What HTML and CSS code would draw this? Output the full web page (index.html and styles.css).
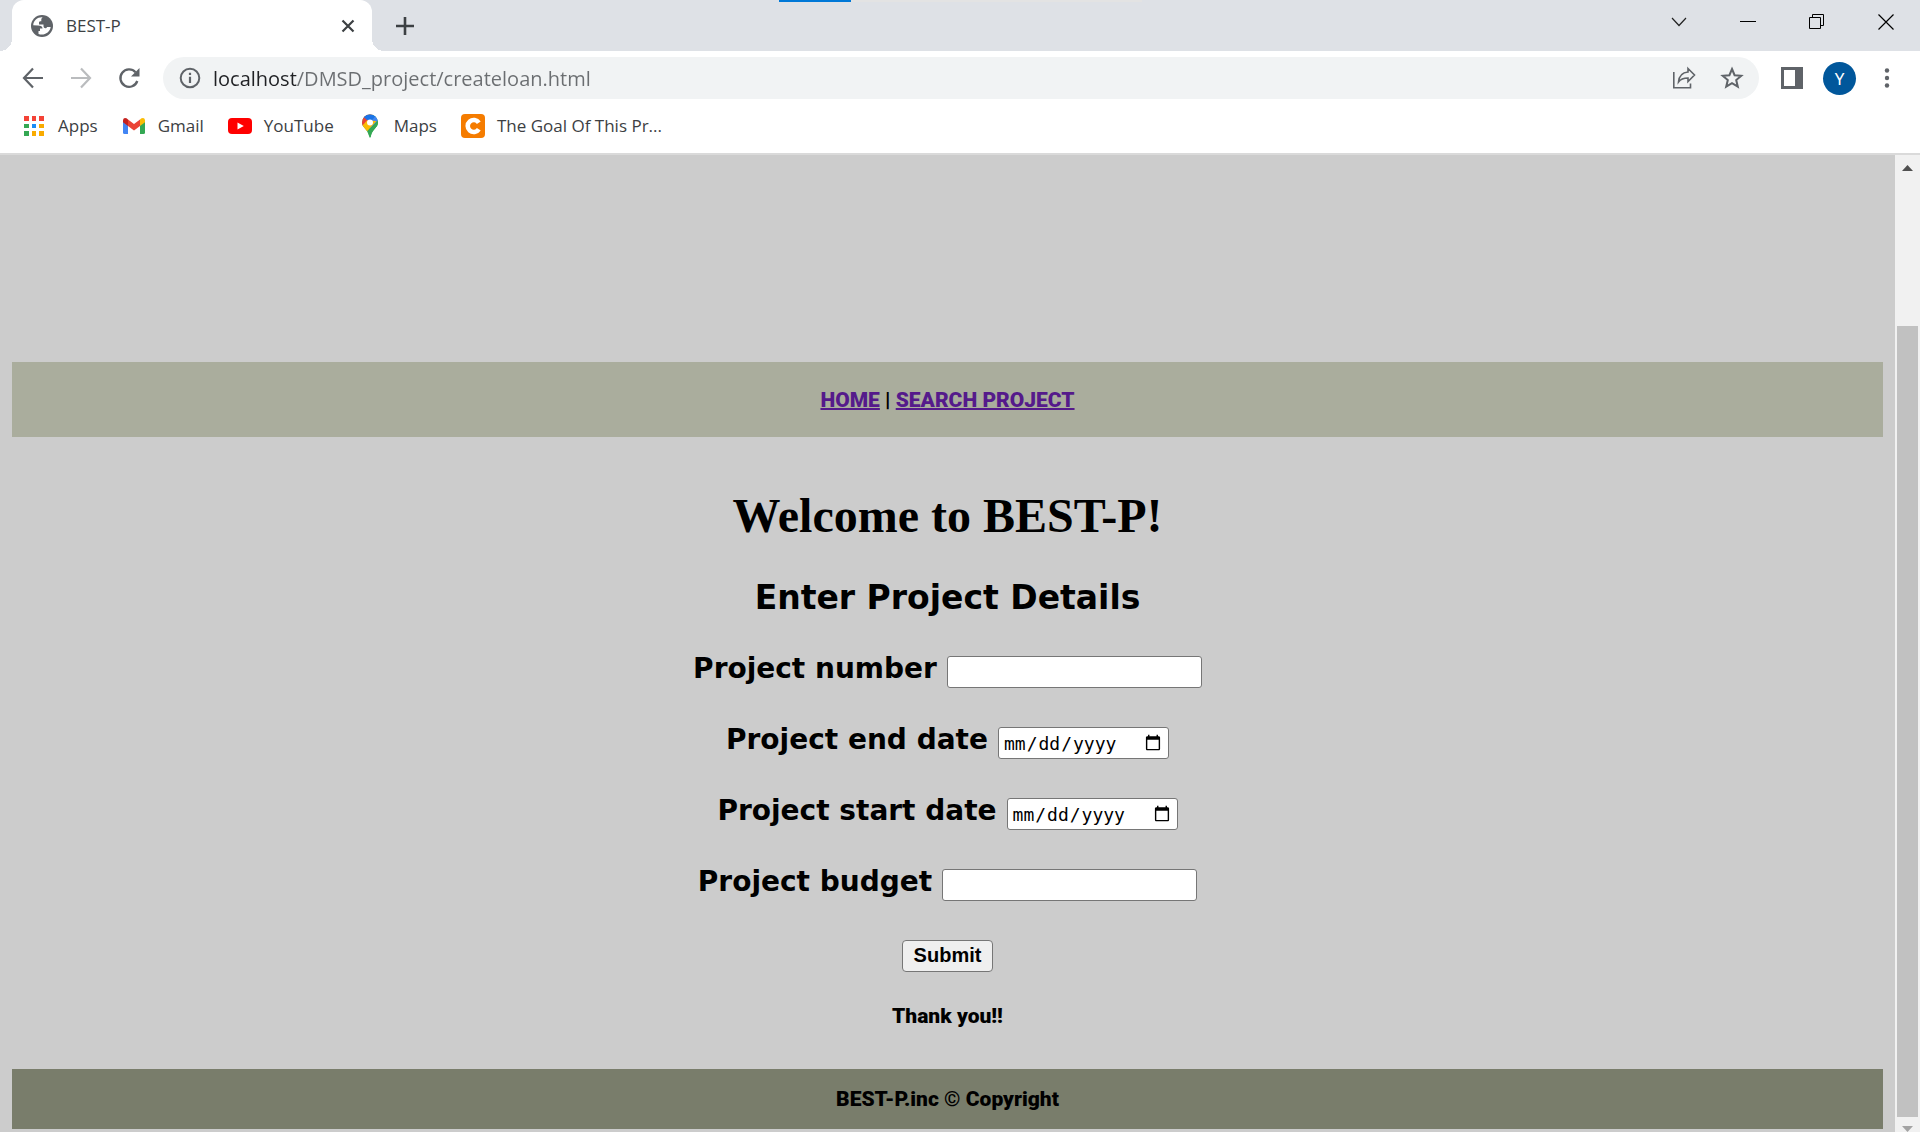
FILE: index.html
```html
<!DOCTYPE html>
<html lang="en-US">
<head>
<meta charset="utf-8">
<title>BEST-P</title>
<link rel="stylesheet" href="styles.css">
</head>
<body>
<div class="browser">
  <header class="tabstrip">
    <div class="tab">
      <svg class="tab-icon" width="24" height="24" viewBox="0 0 24 24"><circle cx="12" cy="12" r="11" fill="#5f6368"/><path d="M12.500 3.300C7.500 3 3.500 6.500 3.200 11.300L8 11.500C11 11.500 12.500 12.500 12.500 14.500H10V17H8.500V20C14 22 20 18.500 20.700 13H17C16.500 15 13.500 14.500 13.500 12V10.500H9V8.500C9 7.500 10 7.300 11.300 7.300V5.500C11.300 4.500 12 4.300 12.500 3.300Z" fill="#fff"/></svg>
      <span class="tab-title">BEST-P</span>
      <button class="tab-close" aria-label="Close tab"><svg width="14" height="14" viewBox="0 0 14 14"><path d="M1.500 1.500L12.500 12.500M12.500 1.500L1.500 12.500" stroke="#3c4043" stroke-width="2.200"/></svg></button>
    </div>
    <button class="new-tab" aria-label="New tab"><svg width="18" height="18" viewBox="0 0 18 18"><path d="M9 0V18M0 9H18" stroke="#3c4043" stroke-width="2.600"/></svg></button>
    <div class="window-controls">
      <button aria-label="Search tabs"><svg width="16" height="16" viewBox="0 0 16 16"><path d="M1 4L8 11.500L15 4" fill="none" stroke="#222" stroke-width="1.200"/></svg></button>
      <button aria-label="Minimize"><svg width="16" height="16" viewBox="0 0 16 16"><path d="M0 7.500H16" stroke="#000"/></svg></button>
      <button aria-label="Restore"><svg width="16" height="16" viewBox="0 0 16 16"><path d="M.5 3.500H11.500V14.500H.5ZM3.500 3V.5H14.500V11.500H12" fill="none" stroke="#000"/></svg></button>
      <button aria-label="Close"><svg width="16" height="16" viewBox="0 0 16 16"><path d="M.5 .5L15.500 15.500M15.500 .5L.5 15.500" stroke="#000" stroke-width="1.200"/></svg></button>
    </div>
    <div class="progress"></div>
  </header>
  <div class="toolbar">
    <div class="nav-buttons">
      <button aria-label="Back"><svg width="24" height="24" viewBox="0 0 24 24"><path d="M22 12H3.500M12 2.500L3 12L12 21.500" fill="none" stroke="#5f6368" stroke-width="2.200"/></svg></button>
      <button aria-label="Forward"><svg width="24" height="24" viewBox="0 0 24 24"><path d="M2 12H20.500M12 2.500L21 12L12 21.500" fill="none" stroke="#babcbe" stroke-width="2.200"/></svg></button>
      <button aria-label="Reload"><svg width="24" height="24" viewBox="0 0 24 24"><path d="M20.300 15A8.700 8.700 0 1 1 18.500 6.200" fill="none" stroke="#5f6368" stroke-width="2.300"/><path d="M22.500 2V10.500H14Z" fill="#5f6368"/></svg></button>
    </div>
    <div class="omnibox">
      <svg width="22" height="22" viewBox="0 0 22 22"><circle cx="11" cy="11" r="9.300" fill="none" stroke="#5f6368" stroke-width="2"/><path d="M11 9.800V16M11 5.800V8" stroke="#5f6368" stroke-width="2.200"/></svg>
      <input class="address" type="text" aria-label="Address" value="localhost/DMSD_project/createloan.html">
      <button aria-label="Share"><svg width="24" height="24" viewBox="0 0 24 24"><path d="M1.800 6V21.800H18.500V17.500M16 2.500L22.500 9L16 15.500V12C11.500 12 8.500 13.200 6.500 16C7 10.500 10.500 6.500 16 6Z" fill="none" stroke="#5f6368" stroke-width="1.600"/></svg></button>
      <button aria-label="Bookmark this page"><svg width="24" height="24" viewBox="0 0 24 24"><path d="M12 3L14.600 9.200L21.300 9.700L16.200 14.100L17.800 20.700L12 17.200L6.200 20.700L7.800 14.100L2.700 9.700L9.400 9.200Z" fill="none" stroke="#5f6368" stroke-width="2"/></svg></button>
    </div>
    <div class="tools">
      <button aria-label="Side panel"><svg width="22" height="22" viewBox="0 0 22 22"><path d="M0 0H22V22H0ZM3 3V19H14V3Z" fill="#5f6368" fill-rule="evenodd"/></svg></button>
      <button class="avatar" aria-label="Profile">Y</button>
      <button aria-label="Menu"><svg width="22" height="22" viewBox="0 0 22 22"><g fill="#5f6368"><circle cx="11" cy="3.500" r="2.200"/><circle cx="11" cy="11" r="2.200"/><circle cx="11" cy="18.500" r="2.200"/></g></svg></button>
    </div>
  </div>
  <nav class="bookmarks" aria-label="Bookmarks">
    <a href="#"><svg width="24" height="24" viewBox="0 0 24 24"><g fill="#f44336"><path d="M2 2h5v5H2zM10 2h4v5h-4zM17 2h5v5h-5z"/></g><path d="M2 10h5v4H2zM2 17h5v5H2z" fill="#34a853"/><path d="M10 10h4v4h-4z" fill="#1a8cf5"/><path d="M17 10h5v4h-5zM17 17h5v5h-5zM10 17h4v5h-4z" fill="#f9ab00"/></svg>Apps</a>
    <a href="#"><svg width="24" height="24" viewBox="0 0 24 24"><path d="M1 6L6 9.500V20H2.500Q1 20 1 18.500Z" fill="#4285f4"/><path d="M18 9.500L23 6V18.500Q23 20 21.500 20H18Z" fill="#34a853"/><path d="M18 5.500L19.500 4.300Q23 3 23 6.500V8.200L18 12Z" fill="#fbbc04"/><path d="M6 12V5.500L12 10L18 5.500V12L12 16.500Z" fill="#ea4335"/><path d="M1 8.200V6.500Q1 3 4.500 4.300L6 5.500V12Z" fill="#c5221f"/></svg>Gmail</a>
    <a href="#"><svg width="24" height="24" viewBox="0 0 24 24"><rect y="4" width="24" height="16" rx="4" fill="#f00"/><path d="M9.500 8.500L15.800 12L9.500 15.500Z" fill="#fff"/></svg>YouTube</a>
    <a href="#"><svg width="24" height="24" viewBox="0 0 24 24"><clipPath id="pin"><path d="M12 .5A8 8 0 0 0 4 8.500C4 14 10 15 11.200 22.500Q12 25 12.800 22.500C14 15 20 14 20 8.500A8 8 0 0 0 12 .5Z"/></clipPath><g clip-path="url(#pin)"><path d="M0 0H24V24H0Z" fill="#34a853"/><path d="M3 15L16 0H3Z" fill="#ea4335"/><path d="M5.500 3L12 8.500L20 0H5Z" fill="#1a73e8"/><path d="M12 8.500L18 1.500L24 5L20 7L12 14Z" fill="#4285f4"/><path d="M4 12L9 6.500L18.500 7L7 19.500Z" fill="#fbbc04"/><path d="M20 6L8 20L14 24L22 14Z" fill="#34a853"/></g><circle cx="12" cy="8.500" r="3" fill="#fff"/></svg>Maps</a>
    <a href="#"><svg width="24" height="24" viewBox="0 0 24 24"><rect width="24" height="24" rx="4" fill="#f57c00"/><path d="M17.800 8.800A6 6 0 1 0 17.800 15.200" fill="none" stroke="#fff" stroke-width="4.600"/></svg>The Goal Of This Pr...</a>
  </nav>
  <div class="viewport">
    <main class="page">
      <nav class="site-nav"><a href="#">HOME</a> | <a href="#">SEARCH PROJECT</a></nav>
      <h1>Welcome to BEST-P!</h1>
      <h2>Enter Project Details</h2>
      <form class="form">
        <div class="row"><label for="number">Project number</label><input id="number" class="field" type="text"></div>
        <div class="row"><label for="end">Project end date</label><input id="end" class="field date" type="date"></div>
        <div class="row"><label for="start">Project start date</label><input id="start" class="field date" type="date"></div>
        <div class="row"><label for="budget">Project budget</label><input id="budget" class="field" type="text"></div>
        <button class="submit" type="submit">Submit</button>
      </form>
      <p class="thanks">Thank you!!</p>
      <footer class="site-footer">BEST-P.inc © Copyright</footer>
    </main>
    <div class="scrollbar">
      <svg width="11" height="6" viewBox="0 0 11 6"><path d="M5.500 0L11 6H0Z" fill="#505050"/></svg>
      <div class="thumb"></div>
      <svg width="11" height="6" viewBox="0 0 11 6"><path d="M0 0H11L5.500 6Z" fill="#a3a3a3"/></svg>
    </div>
  </div>
</div>
</body>
</html>
```
FILE: styles.css
```css
* { box-sizing: border-box; }
body { margin: 0; }
button { border: 0; padding: 0; background: none; display: flex; align-items: center; justify-content: center; }
svg { display: block; flex: none; }

.browser {
  display: flex;
  flex-direction: column;
  min-height: 100vh;
  background: #fff;
  font-family: "Open Sans", "Noto Sans", sans-serif;
  font-size: 17px;
  color: #3c4043;
}

/* Tab strip */
.tabstrip { position: relative; display: flex; height: 51px; padding-left: 12px; background: #dee1e6; }
.tab { position: relative; display: flex; align-items: center; width: 360px; padding: 0 16px 0 18px; background: #fff; border-radius: 12px 12px 0 0; }
.tab::before, .tab::after { content: ""; position: absolute; bottom: 0; width: 12px; height: 12px; }
.tab::before { left: -12px; background: radial-gradient(circle at 0 0, #dee1e6 12px, #fff 12px); }
.tab::after { right: -12px; background: radial-gradient(circle at 100% 0, #dee1e6 12px, #fff 12px); }
.tab-title { flex: 1; margin-left: 12px; }
.tab-close { width: 16px; height: 24px; }
.new-tab { width: 66px; }
.window-controls { display: flex; height: 43px; margin-left: auto; }
.window-controls button { width: 69px; }
.progress { position: absolute; top: 0; left: 779px; width: 363px; height: 2px; background: linear-gradient(90deg, #0078d7 72px, #e3e3e3 72px); }

/* Toolbar */
.toolbar { display: flex; align-items: center; gap: 22px; height: 54px; padding: 0 22px 0 21px; }
.nav-buttons { display: flex; gap: 24px; }
.omnibox { display: flex; flex: 1; align-items: center; gap: 24px; height: 42px; padding: 0 15px 0 16px; border-radius: 21px; background: #f1f3f4; }
.address {
  flex: 1;
  min-width: 0;
  margin-left: -12px;
  padding: 0;
  border: 0;
  font: 20px "Open Sans", "Noto Sans", sans-serif;
  color: transparent;
  background: linear-gradient(90deg, #202124 84px, #6b6e71 84px);
  background-clip: text;
}
.tools { display: flex; align-items: center; gap: 20px; }
.avatar { width: 33px; height: 33px; border-radius: 50%; background: #01579b; color: #fff; font: 17px "Noto Sans", sans-serif; }

/* Bookmarks */
.bookmarks { display: flex; align-items: center; gap: 24px; height: 50px; padding: 0 22px 7px; border-bottom: 2px solid #dadada; }
.bookmarks a { display: flex; align-items: center; gap: 12px; color: #3c4043; text-decoration: none; }

/* Web page */
.viewport { display: flex; flex: 1; }
.page { flex: 1; padding: 207px 12px 3px; background: #ccc; color: #000; text-align: center; }
.site-nav, .thanks, .site-footer { font: 900 21px "Roboto", sans-serif; line-height: 30px; }
.site-nav { padding: 23px 0 22px; background: #aaad9d; }
.site-nav a { color: #551a8b; text-decoration-thickness: 2px; }
h1 { margin: 50px 0 0; font: bold 48px "Liberation Serif", serif; line-height: 58px; }
h2 { margin: 33px 0 0; font: bold 33px "Verdana", "DejaVu Sans", sans-serif; line-height: 40px; }
.form { display: flex; flex-direction: column; align-items: center; gap: 39px; margin-top: 38px; }
.row { display: flex; align-items: flex-start; gap: 10px; }
.row label { font: bold 28px "Verdana", "DejaVu Sans", sans-serif; line-height: 26px; }
.field { width: 255px; height: 32px; padding: 0 4px; border: 1px solid #767676; border-radius: 3px; background: #fff; font: 20px "Liberation Sans", sans-serif; color: #000; }
.date { width: 171px; font: 18px "DejaVu Sans Mono", monospace; }
.submit { width: 91px; height: 32px; padding-bottom: 2px; border: 1px solid #767676; border-radius: 4px; background: #efefef; font: bold 20px "Liberation Sans", sans-serif; color: #000; }
.thanks { margin: 29px 0 38px; }
.site-footer { padding: 15px 0; background: #797d6b; }

/* Scrollbar */
.scrollbar { display: flex; flex-direction: column; align-items: center; width: 25px; padding: 10px 0 0; background: #f1f1f1; }
.thumb { flex: 1; width: 21px; margin: 155px 0 9px; background: #c1c1c1; }
```
